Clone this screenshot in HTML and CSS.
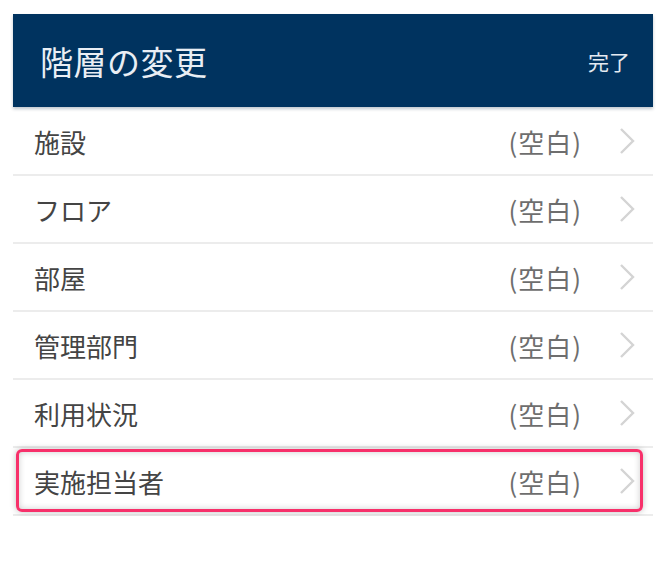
FILE: index.html
```html
<!DOCTYPE html>
<html lang="ja">
<head>
<meta charset="utf-8">
<title>階層の変更</title>
<link rel="stylesheet" href="styles.css">
</head>
<body>
<div class="screen">
  <header class="bar">
    <h1 class="bar-title">階層の変更</h1>
    <span class="bar-action">完了</span>
  </header>
  <ul class="list">
    <li class="row"><span class="label">施設</span><span class="value">(空白)</span><svg class="chev" viewBox="0 0 16 28"><path d="M2 2 L14 14 L2 26" /></svg></li>
    <li class="row"><span class="label">フロア</span><span class="value">(空白)</span><svg class="chev" viewBox="0 0 16 28"><path d="M2 2 L14 14 L2 26" /></svg></li>
    <li class="row"><span class="label">部屋</span><span class="value">(空白)</span><svg class="chev" viewBox="0 0 16 28"><path d="M2 2 L14 14 L2 26" /></svg></li>
    <li class="row"><span class="label">管理部門</span><span class="value">(空白)</span><svg class="chev" viewBox="0 0 16 28"><path d="M2 2 L14 14 L2 26" /></svg></li>
    <li class="row"><span class="label">利用状況</span><span class="value">(空白)</span><svg class="chev" viewBox="0 0 16 28"><path d="M2 2 L14 14 L2 26" /></svg></li>
    <li class="row row-marked"><span class="label">実施担当者</span><span class="value">(空白)</span><svg class="chev" viewBox="0 0 16 28"><path d="M2 2 L14 14 L2 26" /></svg><span class="mark"></span></li>
  </ul>
</div>
</body>
</html>
```

FILE: styles.css
```css
html, body {
  margin: 0;
  padding: 0;
  background: #ffffff;
}

body {
  font-family: "Noto Sans CJK JP", "Noto Sans", sans-serif;
}

.screen {
  padding: 14px 14px 0 13px;
}

.bar {
  height: 93px;
  background: #00335f;
  display: flex;
  align-items: center;
  justify-content: space-between;
  padding: 0 23px 0 27px;
  box-shadow: 0 2px 3px rgba(0, 30, 60, 0.25);
  position: relative;
  z-index: 1;
}

.bar-title {
  margin: 0;
  font-size: 33px;
  font-weight: 400;
  color: #e9eef4;
  letter-spacing: 0.5px;
}

.bar-action {
  font-size: 21px;
  color: #e4eaf1;
}

.list {
  list-style: none;
  margin: 0;
  padding: 1px 0 0;
}

.row {
  position: relative;
  display: flex;
  align-items: center;
  height: 66px;
  border-bottom: 2px solid #ececec;
  padding: 0 18px 0 21px;
}

.label {
  flex: 1;
  font-size: 26px;
  color: #444444;
}

.value {
  font-size: 26px;
  color: #6e6e6e;
  letter-spacing: 1px;
}

.chev {
  width: 16px;
  height: 28px;
  margin-left: 37px;
  fill: none;
  stroke: #d4d4d4;
  stroke-width: 2.4;
}

.mark {
  position: absolute;
  left: 3px;
  right: 10px;
  top: 1px;
  bottom: 2px;
  border: 3px solid #f7306a;
  border-radius: 6px;
  box-shadow: 0 0 6px rgba(0, 0, 0, 0.25), inset 0 0 6px rgba(0, 0, 0, 0.2);
}
```
